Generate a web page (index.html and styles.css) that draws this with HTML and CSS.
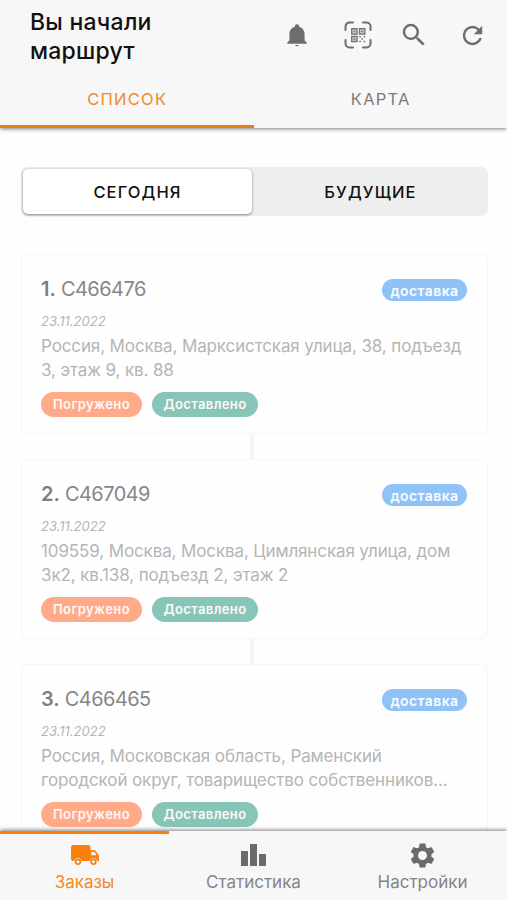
FILE: index.html
```html
<!DOCTYPE html>
<html lang="ru">
<head>
<meta charset="utf-8">
<meta name="viewport" content="width=device-width, initial-scale=1">
<title>Маршрут</title>
<link rel="stylesheet" href="styles.css">
</head>
<body>
<div class="app">
  <header class="header">
    <div class="toolbar">
      <h1 class="title">Вы начали маршрут</h1>
      <div class="actions">
        <svg class="icon bell" viewBox="0 0 24 24"><path fill="currentColor" d="M21 19v1H3v-1l2-2v-6c0-3.100 2.030-5.830 5-6.710V4a2 2 0 0 1 4 0v.29c2.970.88 5 3.610 5 6.710v6l2 2m-7.300 2.200a1.800 1.800 0 0 1-3.400 0"/></svg>
        <svg class="icon scan" viewBox="0 0 28 28" fill="none" stroke="currentColor">
          <path stroke-width="2" stroke-linecap="round" d="M1.500 9V5.500a4 4 0 0 1 4-4H9M19 1.500h3.500a4 4 0 0 1 4 4V9M26.500 19v3.500a4 4 0 0 1-4 4H19M9 26.500H5.500a4 4 0 0 1-4-4V19"/>
          <path stroke-width="1.200" fill="#c4c4c4" d="M7.700 7.700h5.400v5.400H7.700zM15.500 7.700h5.400v5.400h-5.400zM7.700 15.300h5.400v5.400H7.700z"/>
          <path stroke-width="1.400" d="M15.300 15.800h1.500M19.700 15.800h1.500M17.500 18h1.500M15.300 20.500h1.500M19.700 20.500h1.500M9.700 10.400h1.400M17.500 10.400h1.400M9.700 18h1.400"/>
        </svg>
        <svg class="icon search" viewBox="0 0 24 24"><path fill="currentColor" d="M15.500 14h-.79l-.28-.27A6.470 6.470 0 0 0 16 9.500 6.500 6.500 0 1 0 9.500 16c1.610 0 3.090-.59 4.230-1.570l.27.28v.79l5 4.990L20.490 19l-4.990-5zm-6 0C7.010 14 5 11.990 5 9.500S7.010 5 9.500 5 14 7.010 14 9.500 11.990 14 9.500 14z"/></svg>
        <svg class="icon refresh" viewBox="0 0 24 24"><path fill="currentColor" d="M17.650 6.350A7.958 7.958 0 0 0 12 4a8 8 0 1 0 7.730 10h-2.080A6 6 0 1 1 12 6c1.660 0 3.140.69 4.220 1.780L13 11h7V4l-2.350 2.350z"/></svg>
      </div>
    </div>
    <div class="tabs">
      <div class="tab tab-active"><span>СПИСОК</span></div>
      <div class="tab"><span>КАРТА</span></div>
    </div>
  </header>

  <main class="content">
    <div class="segment">
      <div class="segment-item segment-selected">СЕГОДНЯ</div>
      <div class="segment-item">БУДУЩИЕ</div>
    </div>

    <div class="orders">
      <article class="card">
        <div class="card-head"><h2 class="number"><b>1.</b> C466476</h2><span class="badge">доставка</span></div>
        <div class="date">23.11.2022</div>
        <p class="address">Россия, Москва, Марксистская улица, 38, подъезд<br>3, этаж 9, кв. 88</p>
        <div class="tags"><span class="tag loaded">Погружено</span><span class="tag delivered">Доставлено</span></div>
      </article>
      <div class="link"></div>
      <article class="card">
        <div class="card-head"><h2 class="number"><b>2.</b> C467049</h2><span class="badge">доставка</span></div>
        <div class="date">23.11.2022</div>
        <p class="address">109559, Москва, Москва, Цимлянская улица, дом<br>3к2, кв.138, подъезд 2, этаж 2</p>
        <div class="tags"><span class="tag loaded">Погружено</span><span class="tag delivered">Доставлено</span></div>
      </article>
      <div class="link"></div>
      <article class="card">
        <div class="card-head"><h2 class="number"><b>3.</b> C466465</h2><span class="badge">доставка</span></div>
        <div class="date">23.11.2022</div>
        <p class="address">Россия, Московская область, Раменский<br>городской округ, товарищество собственников...</p>
        <div class="tags"><span class="tag loaded">Погружено</span><span class="tag delivered">Доставлено</span></div>
      </article>
    </div>
  </main>

  <nav class="nav">
    <div class="nav-item nav-active">
      <svg class="nav-icon truck" viewBox="0 0 28 20"><path fill="currentColor" fill-rule="evenodd" d="M2.500 0H17.500a2 2 0 0 1 2 2V5H23a2 2 0 0 1 1.500.7L27.600 10a2 2 0 0 1 .4 1.200V16h-1.700a4 4 0 0 0-7.700 0H10.800a4 4 0 0 0-7.700 0H2a2 2 0 0 1-2-2V2.500A2.500 2.500 0 0 1 2.500 0zM20.300 6.800V10.200H25.600L23.200 6.800z"/><circle cx="6.950" cy="16.700" r="2.400" fill="none" stroke="currentColor" stroke-width="1.700"/><circle cx="22.450" cy="16.700" r="2.400" fill="none" stroke="currentColor" stroke-width="1.700"/></svg>
      <span>Заказы</span>
    </div>
    <div class="nav-item">
      <svg class="nav-icon chart" viewBox="0 0 25 22"><path fill="currentColor" d="M0 7h7v15H0zM9 0h7v22H9zM18 10h7v12h-7z"/></svg>
      <span>Статистика</span>
    </div>
    <div class="nav-item">
      <svg class="nav-icon gear" viewBox="2 2 20 20"><path fill="currentColor" d="M19.140 12.940c.04-.3.060-.61.060-.94 0-.32-.02-.64-.07-.94l2.030-1.580a.49.49 0 0 0 .12-.61l-1.920-3.320a.488.488 0 0 0-.59-.22l-2.390.96c-.5-.38-1.030-.7-1.620-.94l-.36-2.540a.484.484 0 0 0-.48-.41h-3.840c-.24 0-.43.17-.47.41l-.36 2.540c-.59.24-1.130.57-1.620.94l-2.390-.96c-.22-.08-.47 0-.59.22L2.740 8.870c-.12.21-.08.47.12.61l2.030 1.580c-.05.3-.09.63-.09.94s.02.64.07.94l-2.030 1.580a.49.49 0 0 0-.12.61l1.920 3.320c.12.22.37.29.59.22l2.390-.96c.5.38 1.030.7 1.620.94l.36 2.540c.05.24.24.41.48.41h3.840c.24 0 .44-.17.47-.41l.36-2.540c.59-.24 1.130-.56 1.620-.94l2.390.96c.22.08.47 0 .59-.22l1.920-3.320c.12-.22.07-.47-.12-.61l-2.010-1.580zM12 15.600A3.610 3.610 0 0 1 8.400 12c0-1.980 1.620-3.600 3.600-3.600s3.600 1.620 3.600 3.600-1.620 3.600-3.600 3.600z"/></svg>
      <span>Настройки</span>
    </div>
  </nav>
</div>
</body>
</html>
```
FILE: styles.css
```css
* { box-sizing: border-box; }
body { margin: 0; font-family: Inter, "Liberation Sans", sans-serif; background: #fefefe; color: #111; }
h1, h2, p { margin: 0; }
.app { display: flex; flex-direction: column; height: 900px; overflow: hidden; }

.header { flex: none; height: 128px; display: flex; flex-direction: column; background: #f7f7f7; box-shadow: 0 1px 4px rgba(0,0,0,.5); z-index: 1; }
.toolbar { height: 72px; display: flex; justify-content: space-between; padding: 7px 20px 0 30px; }
.title { width: 150px; padding-top: 1px; font-size: 23px; line-height: 29px; font-weight: 500; letter-spacing: .25px; }
.actions { display: flex; align-items: center; height: 56px; color: #6d6d6d; }
.icon { display: block; flex: none; }
.bell { width: 26px; height: 26px; margin-right: 34px; }
.scan { width: 28px; height: 28px; margin-right: 27px; }
.search { width: 30px; height: 30px; margin-right: 29px; }
.refresh { width: 29px; height: 29px; }
.tabs { flex: 1; display: flex; }
.tab { flex: 1; display: flex; align-items: center; justify-content: center; padding: 1px 0 0 1px; font-size: 16.500px; letter-spacing: 1.250px; color: #7c7c7c; border-bottom: 3px solid transparent; }
.tab-active { color: #ee8a2c; border-color: #ea7f16; }

.content { flex: 1; min-height: 0; padding: 39px 19px 0 21px; overflow: hidden; }
.segment { height: 49px; display: flex; padding: 2px 0 2px 2px; background: #eee; border-radius: 7px; margin-bottom: 38px; }
.segment-item { flex: 1; display: flex; align-items: center; justify-content: center; padding-left: 1px; font-size: 16.500px; font-weight: 500; letter-spacing: 1.100px; border-radius: 5px; }
.segment-selected { flex: none; width: 229px; padding-left: 0; background: #fff; box-shadow: 0 1px 3px rgba(0,0,0,.45); }

.card { height: 180px; padding: 21px 20px 0 19px; border: 1.500px solid #f6f6f6; border-radius: 5px; }
.card-head { display: flex; justify-content: space-between; height: 26px; }
.number { font-size: 20px; line-height: 26px; font-weight: 400; letter-spacing: -.55px; color: #878787; }
.number b { font-weight: 600; letter-spacing: 0; color: #7e7e7e; }
.badge { width: 85px; height: 22px; margin-top: 3px; text-align: center; border-radius: 11px; background: #8fc3f8; color: #f8fcff; font-size: 14px; line-height: 23px; font-weight: 600; letter-spacing: .4px; }
.date { margin-top: 11px; font-size: 13px; line-height: 16px; font-style: italic; color: #b5b5b5; }
.address { margin-top: 5px; font-size: 17px; line-height: 24px; letter-spacing: -.12px; color: #b5b5b5; white-space: nowrap; }
.tags { display: flex; gap: 10px; margin-top: 10px; }
.tag { width: 101px; height: 25px; text-align: center; border-radius: 13px; color: #fff9f6; font-size: 13px; line-height: 25px; font-weight: 600; letter-spacing: .4px; }
.loaded { background: #ffab89; }
.delivered { width: 106px; background: #88c5b9; }
.link { width: 4px; height: 25.200px; margin: 0 auto 0 229px; background: #f6f6f6; }

.nav { flex: none; height: 69px; display: flex; background: #f7f7f7; box-shadow: 0 -1px 4px rgba(0,0,0,.5); z-index: 1; }
.nav-item { flex: 1; display: flex; flex-direction: column; align-items: center; color: #858585; font-size: 17px; line-height: 22px; border-top: 3px solid transparent; }
.nav-active { color: #f58a20; border-color: #f97f0e; }
.nav-icon { flex: none; color: #6b6b6b; margin-bottom: 5px; }
.nav-active .nav-icon { color: #fb7f0c; }
.truck { width: 28px; height: 20px; margin-top: 11px; margin-bottom: 6px; }
.chart { width: 25px; height: 22px; margin-top: 10px; }
.gear { width: 25px; height: 25px; margin-top: 9px; margin-bottom: 3px; }
```
